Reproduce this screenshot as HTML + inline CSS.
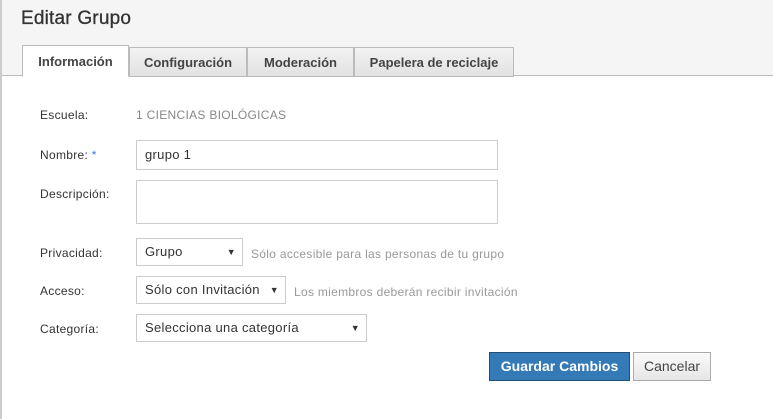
<!DOCTYPE html>
<html><head><meta charset="utf-8"><style>
*{box-sizing:border-box;margin:0;padding:0}
body{width:773px;height:419px;background:#fff;font-family:"Liberation Sans",sans-serif;position:relative;overflow:hidden;color:#333}
.lb{position:absolute;left:0;top:0;width:2px;height:419px;background:#ccc}
.hd{position:absolute;left:2px;top:0;width:771px;height:76px;background:#f5f5f5;border-bottom:1px solid #bbb}
h1{position:absolute;left:21px;top:8px;font-size:19px;font-weight:normal;color:#333;letter-spacing:0.2px;-webkit-text-stroke:0.3px #333}
.tab{position:absolute;top:47px;height:30px;border:1px solid #bbb;background:linear-gradient(#f2f2f2,#e2e2e2);font-size:13px;font-weight:bold;color:#444;text-align:center;line-height:29px}
.tab.a{top:45px;height:32px;background:#fff;border-bottom-color:#fff;line-height:31px}
.l{position:absolute;left:40px;font-size:12px;color:#333;letter-spacing:0.3px}
.in{position:absolute;border:1px solid #ccc;background:#fff;font-size:13px;color:#333;padding-left:8px;letter-spacing:0.3px}
.ar{position:absolute;font-size:9px;color:#333}
.h{position:absolute;font-size:12px;color:#999;letter-spacing:0.3px}
.btn{position:absolute;top:352px;height:29px;font-size:14px;line-height:27px;text-align:center}
</style></head><body>
<div class="hd"></div><div class="lb"></div>
<h1>Editar Grupo</h1>
<div class="tab a" style="left:22px;width:107px">Información</div>
<div class="tab" style="left:129px;width:118px">Configuración</div>
<div class="tab" style="left:247px;width:107px">Moderación</div>
<div class="tab" style="left:354px;width:160px">Papelera de reciclaje</div>
<div class="l" style="top:108px">Escuela:</div>
<div class="h" style="left:136px;top:108px;color:#888">1 CIENCIAS BIOLÓGICAS</div>
<div class="l" style="top:148px">Nombre: <span style="color:#3b7bd4">*</span></div>
<div class="in" style="left:136px;top:140px;width:362px;height:30px;line-height:28px">grupo 1</div>
<div class="l" style="top:187px">Descripción:</div>
<div class="in" style="left:136px;top:180px;width:362px;height:44px"></div>
<div class="l" style="top:246px">Privacidad:</div>
<div class="in" style="left:136px;top:238px;width:107px;height:28px;line-height:26px">Grupo<span class="ar" style="right:6px;top:0">▼</span></div>
<div class="h" style="left:251px;top:247px">Sólo accesible para las personas de tu grupo</div>
<div class="l" style="top:284px">Acceso:</div>
<div class="in" style="left:136px;top:276px;width:150px;height:28px;line-height:26px">Sólo con Invitación<span class="ar" style="right:6px;top:0">▼</span></div>
<div class="h" style="left:294px;top:285px">Los miembros deberán recibir invitación</div>
<div class="l" style="top:322px">Categoría:</div>
<div class="in" style="left:136px;top:314px;width:231px;height:28px;line-height:26px">Selecciona una categoría<span class="ar" style="right:6px;top:0">▼</span></div>
<div class="btn" style="left:489px;width:141px;background:#337ab7;border:1px solid #1f4f78;color:#fff;font-weight:bold">Guardar Cambios</div>
<div class="btn" style="left:633px;width:78px;background:linear-gradient(#fafafa,#e6e6e6);border:1px solid #aaa;color:#444">Cancelar</div>
</body></html>
